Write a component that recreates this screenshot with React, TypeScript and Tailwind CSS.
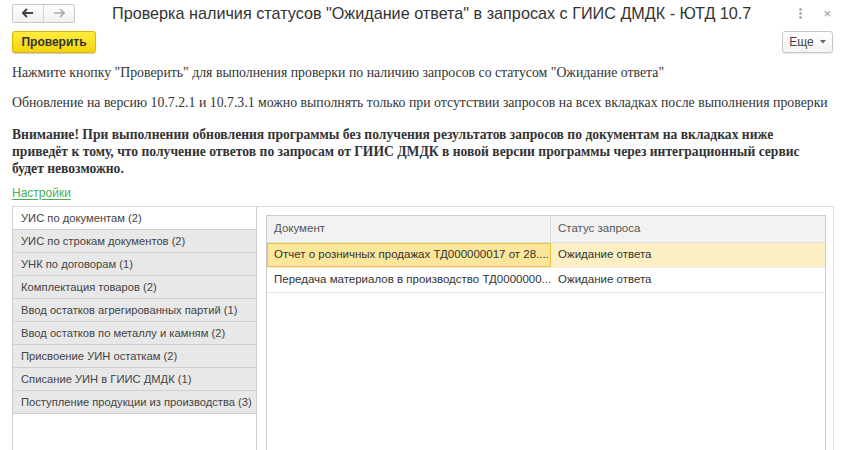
import React from "react";

const tabs = [
  "УИС по документам (2)",
  "УИС по строкам документов (2)",
  "УНК по договорам (1)",
  "Комплектация товаров (2)",
  "Ввод остатков агрегированных партий (1)",
  "Ввод остатков по металлу и камням (2)",
  "Присвоение УИН остаткам (2)",
  "Списание УИН в ГИИС ДМДК (1)",
  "Поступление продукции из производства (3)",
];

const rows = [
  { doc: "Отчет о розничных продажах ТД000000017 от 28....", status: "Ожидание ответа", active: true },
  { doc: "Передача материалов в производство ТД0000000...", status: "Ожидание ответа", active: false },
];

export default function App() {
  return (
    <div className="w-[853px] h-[450px] overflow-hidden bg-white text-[#333] font-['Liberation_Sans',Arial,sans-serif]">
      {/* Title bar */}
      <div className="flex items-center h-[26px] pl-[12px] pr-[22px]">
        <div className="flex h-[19px] border border-[#c8c8c8] rounded-[2px] bg-gradient-to-b from-white to-[#f0f0f0]">
          <div className="w-[31px] flex items-center justify-center border-r border-[#d6d6d6]">
            <svg width="12" height="10" viewBox="0 0 12 10">
              <path d="M1 5h10M5 1L1 5l4 4" stroke="#444" strokeWidth="2" fill="none" />
            </svg>
          </div>
          <div className="w-[30px] flex items-center justify-center">
            <svg width="12" height="10" viewBox="0 0 12 10">
              <path d="M1 5h10M7 1l4 4-4 4" stroke="#aaa" strokeWidth="1.6" fill="none" />
            </svg>
          </div>
        </div>
        <div className="ml-[37px] text-[16.2px] text-[#333] leading-none whitespace-nowrap">
          Проверка наличия статусов "Ожидание ответа" в запросах с ГИИС ДМДК - ЮТД 10.7
        </div>
        <div className="ml-auto flex items-center gap-[21px] text-[#999]">
          <svg width="3" height="11" viewBox="0 0 3 11">
            <circle cx="1.5" cy="1.5" r="1.3" fill="#999" />
            <circle cx="1.5" cy="5.5" r="1.3" fill="#999" />
            <circle cx="1.5" cy="9.5" r="1.3" fill="#999" />
          </svg>
          <span className="text-[13px] leading-none">×</span>
        </div>
      </div>

      {/* Command bar */}
      <div className="flex items-center mt-[5px] pl-[12px] pr-[20px]">
        <button className="h-[22px] w-[84px] rounded-[3px] border border-[#d9b800] bg-gradient-to-b from-[#ffec3d] to-[#f5d400] text-[12px] font-bold text-[#333] shadow-[0_1px_1px_rgba(0,0,0,0.2)]">
          Проверить
        </button>
        <button className="ml-auto h-[22px] w-[51px] flex items-center justify-center gap-[6px] rounded-[3px] border border-[#c8c8c8] bg-gradient-to-b from-white to-[#f2f2f2] text-[12px] text-[#444] shadow-[0_1px_1px_rgba(0,0,0,0.1)]">
          Еще
          <svg width="6" height="4" viewBox="0 0 6 4">
            <path d="M0 0h6L3 3.5z" fill="#666" />
          </svg>
        </button>
      </div>

      {/* Info text */}
      <div className="pl-[12px] pr-[10px] font-['Liberation_Serif','Times_New_Roman',serif] text-[13.8px] text-[#333]">
        <p className="mt-[11px] leading-[17px] whitespace-nowrap">
          Нажмите кнопку "Проверить" для выполнения проверки по наличию запросов со статусом "Ожидание ответа"
        </p>
        <p className="mt-[13px] leading-[17px] whitespace-nowrap">
          Обновление на версию 10.7.2.1 и 10.7.3.1 можно выполнять только при отсутствии запросов на всех вкладках после выполнения проверки
        </p>
        <p className="mt-[15px] leading-[17px] font-bold w-[815px] text-[13.6px]">
          Внимание! При выполнении обновления программы без получения результатов запросов по документам на вкладках ниже приведёт к тому, что получение ответов по запросам от ГИИС ДМДК в новой версии программы через интеграционный сервис будет невозможно.
        </p>
      </div>

      <div className="pl-[12px] mt-[7px] h-[17px] flex items-center">
        <span className="text-[12px] text-[#4caf50] underline decoration-[#4caf50] underline-offset-2">Настройки</span>
      </div>

      {/* Tabs + table */}
      <div className="ml-[12px] mt-[5px] w-[822px] h-[260px] flex border-t border-r border-[#dcdcdc]">
        <div className="w-[245px] flex flex-col border-l border-r border-[#cfcfcf] text-[11.2px] text-[#444]">
          {tabs.map((t, i) => (
            <div
              key={t}
              className={
                i === 0
                  ? "h-[23px] flex items-center pl-[8px] bg-white border-b border-[#d0d0d0] whitespace-nowrap"
                  : "h-[23px] flex items-center pl-[8px] bg-[#e8e8e8] border-b border-[#cfcfcf] whitespace-nowrap"
              }
            >
              {t}
            </div>
          ))}
        </div>
        <div className="flex-1 pl-[9px] pr-[7px] pt-[8px]">
          <div className="h-full border border-[#cdcdcd] text-[11.5px]">
            <div className="flex h-[27px] bg-[#f2f2f2] border-b border-[#dedede] text-[#555]">
              <div className="w-[284px] flex items-center pl-[7px] border-r border-[#dcdcdc]">Документ</div>
              <div className="flex-1 flex items-center pl-[7px]">Статус запроса</div>
            </div>
            {rows.map((r) => (
              <div
                key={r.doc}
                className={
                  r.active
                    ? "flex h-[25px] bg-[#fcefc3] border-b border-[#ececec]"
                    : "flex h-[25px] bg-white border-b border-[#e6e6e6]"
                }
              >
                <div
                  className={
                    r.active
                      ? "w-[284px] flex items-center pl-[6px] pr-[4px] bg-[#fbe69a] border border-[#f0c23a] whitespace-nowrap overflow-hidden"
                      : "w-[284px] flex items-center pl-[7px] pr-[4px] whitespace-nowrap overflow-hidden"
                  }
                >
                  {r.doc}
                </div>
                <div className="flex-1 flex items-center pl-[7px]">{r.status}</div>
              </div>
            ))}
          </div>
        </div>
      </div>
    </div>
  );
}
